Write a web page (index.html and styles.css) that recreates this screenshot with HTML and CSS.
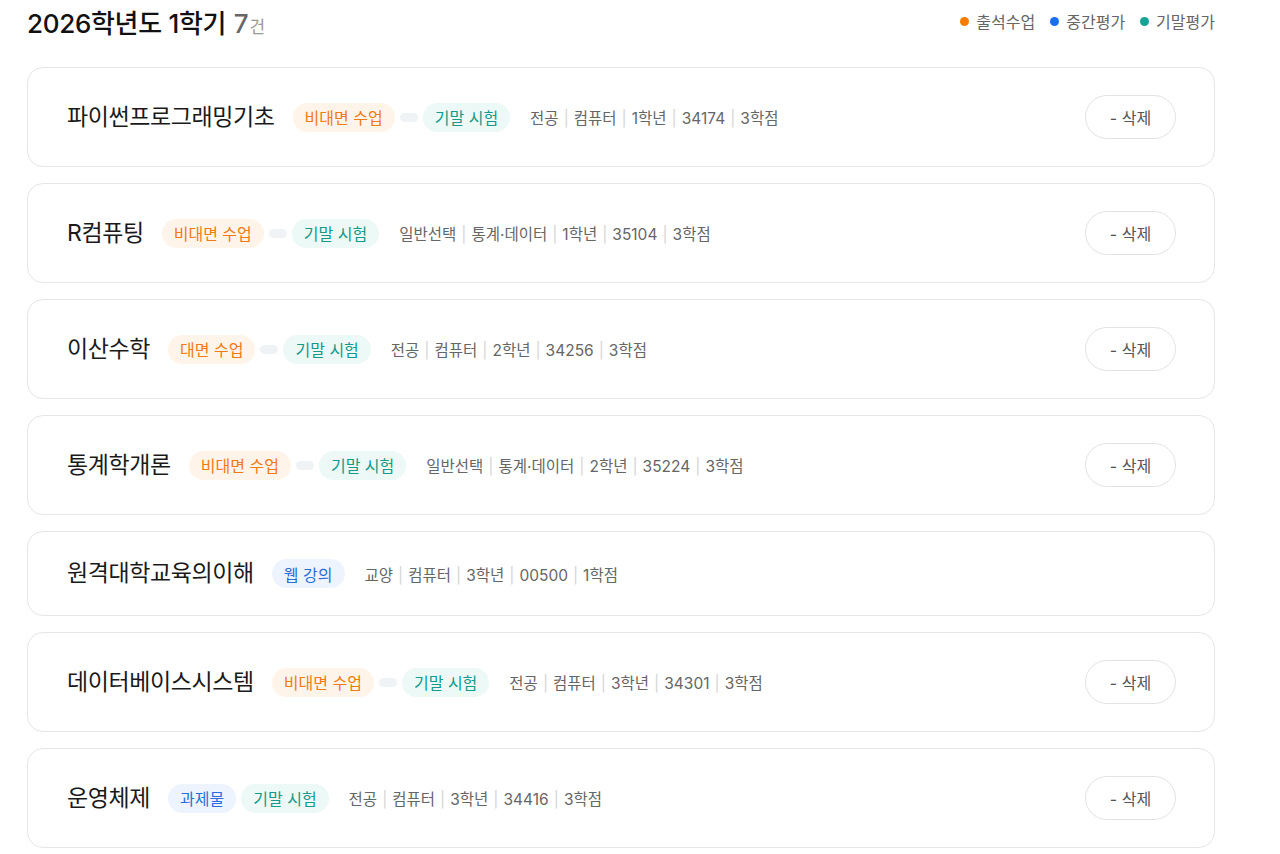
FILE: index.html
```html
<!DOCTYPE html>
<html lang="ko">
<head>
<meta charset="utf-8">
<title>2026학년도 1학기</title>
<link rel="stylesheet" href="styles.css">
</head>
<body>
<main class="page">
  <header class="head">
    <h1 class="title">2026학년도 1학기 <span class="count">7</span><span class="unit">건</span></h1>
    <ul class="legend">
      <li><span class="dot dot-orange"></span>출석수업</li>
      <li><span class="dot dot-blue"></span>중간평가</li>
      <li><span class="dot dot-teal"></span>기말평가</li>
    </ul>
  </header>

  <section class="list">
    <article class="card">
      <div class="info">
        <h2 class="name">파이썬프로그래밍기초</h2>
        <div class="tags">
          <span class="tag tag-orange">비대면 수업</span>
          <span class="link"></span>
          <span class="tag tag-teal">기말 시험</span>
        </div>
        <p class="meta">전공<i>|</i>컴퓨터<i>|</i>1학년<i>|</i>34174<i>|</i>3학점</p>
      </div>
      <button class="del">- 삭제</button>
    </article>

    <article class="card">
      <div class="info">
        <h2 class="name">R컴퓨팅</h2>
        <div class="tags">
          <span class="tag tag-orange">비대면 수업</span>
          <span class="link"></span>
          <span class="tag tag-teal">기말 시험</span>
        </div>
        <p class="meta">일반선택<i>|</i>통계·데이터<i>|</i>1학년<i>|</i>35104<i>|</i>3학점</p>
      </div>
      <button class="del">- 삭제</button>
    </article>

    <article class="card">
      <div class="info">
        <h2 class="name">이산수학</h2>
        <div class="tags">
          <span class="tag tag-orange">대면 수업</span>
          <span class="link"></span>
          <span class="tag tag-teal">기말 시험</span>
        </div>
        <p class="meta">전공<i>|</i>컴퓨터<i>|</i>2학년<i>|</i>34256<i>|</i>3학점</p>
      </div>
      <button class="del">- 삭제</button>
    </article>

    <article class="card">
      <div class="info">
        <h2 class="name">통계학개론</h2>
        <div class="tags">
          <span class="tag tag-orange">비대면 수업</span>
          <span class="link"></span>
          <span class="tag tag-teal">기말 시험</span>
        </div>
        <p class="meta">일반선택<i>|</i>통계·데이터<i>|</i>2학년<i>|</i>35224<i>|</i>3학점</p>
      </div>
      <button class="del">- 삭제</button>
    </article>

    <article class="card">
      <div class="info">
        <h2 class="name">원격대학교육의이해</h2>
        <div class="tags">
          <span class="tag tag-blue">웹 강의</span>
        </div>
        <p class="meta">교양<i>|</i>컴퓨터<i>|</i>3학년<i>|</i>00500<i>|</i>1학점</p>
      </div>
    </article>

    <article class="card">
      <div class="info">
        <h2 class="name">데이터베이스시스템</h2>
        <div class="tags">
          <span class="tag tag-orange">비대면 수업</span>
          <span class="link"></span>
          <span class="tag tag-teal">기말 시험</span>
        </div>
        <p class="meta">전공<i>|</i>컴퓨터<i>|</i>3학년<i>|</i>34301<i>|</i>3학점</p>
      </div>
      <button class="del">- 삭제</button>
    </article>

    <article class="card">
      <div class="info">
        <h2 class="name">운영체제</h2>
        <div class="tags">
          <span class="tag tag-blue">과제물</span>
          <span class="tag tag-teal">기말 시험</span>
        </div>
        <p class="meta">전공<i>|</i>컴퓨터<i>|</i>3학년<i>|</i>34416<i>|</i>3학점</p>
      </div>
      <button class="del">- 삭제</button>
    </article>
  </section>
</main>
</body>
</html>
```

FILE: styles.css
```css
* { box-sizing: border-box; }

html, body {
  margin: 0;
  padding: 0;
  background: #ffffff;
}

body {
  font-family: Inter, "Noto Sans CJK KR", "Noto Sans", sans-serif;
  color: #222;
}

.page {
  width: 1188px;
  margin-left: 27px;
}

.head {
  display: flex;
  justify-content: space-between;
  align-items: center;
  height: 42px;
  margin-bottom: 25px;
}

.title {
  margin: 0;
  font-size: 26px;
  font-weight: 500;
  color: #111;
  letter-spacing: -0.3px;
}

.count {
  color: #666;
  font-weight: 500;
  margin-left: 1px;
}

.unit {
  color: #999;
  font-size: 17px;
  font-weight: 400;
  margin-left: 1px;
}

.legend {
  display: flex;
  gap: 15px;
  margin: 0;
  padding: 0;
  list-style: none;
  font-size: 16px;
  color: #666;
}

.legend li {
  display: flex;
  align-items: center;
  gap: 7px;
}

.dot {
  width: 9px;
  height: 9px;
  border-radius: 50%;
  display: inline-block;
}
.dot-orange { background: #f57c00; }
.dot-blue { background: #1a6ff0; }
.dot-teal { background: #14a394; }

.list {
  display: flex;
  flex-direction: column;
  gap: 16px;
}

.card {
  display: flex;
  align-items: center;
  justify-content: space-between;
  border: 1px solid #e6e6e6;
  border-radius: 16px;
  padding: 27px 38px 27px 39px;
}

.info {
  display: flex;
  align-items: center;
}

.name {
  margin: 0 18px 0 0;
  font-size: 23px;
  line-height: 29px;
  font-weight: 400;
  color: #1a1a1a;
  letter-spacing: -0.4px;
}

.tags {
  display: flex;
  align-items: center;
  gap: 5px;
  margin-right: 20px;
}

.tag {
  display: inline-flex;
  align-items: center;
  height: 29px;
  padding: 0 12px;
  border-radius: 15px;
  font-size: 16px;
}

.tag-orange { background: #fff4ea; color: #f07a14; }
.tag-teal { background: #ecf9f7; color: #14998a; }
.tag-blue { background: #eef4fd; color: #2a6fd6; }

.link {
  width: 18px;
  height: 9px;
  border-radius: 5px;
  background: #f0f3f6;
}

.meta {
  margin: 0;
  font-size: 15.5px;
  color: #666;
}

.meta i {
  font-style: normal;
  color: #d6d6d6;
  margin: 0 5px;
}

.del {
  width: 91px;
  height: 44px;
  border: 1px solid #e3e3e3;
  border-radius: 23px;
  background: #fff;
  font-family: inherit;
  font-size: 16px;
  color: #555;
}
```
